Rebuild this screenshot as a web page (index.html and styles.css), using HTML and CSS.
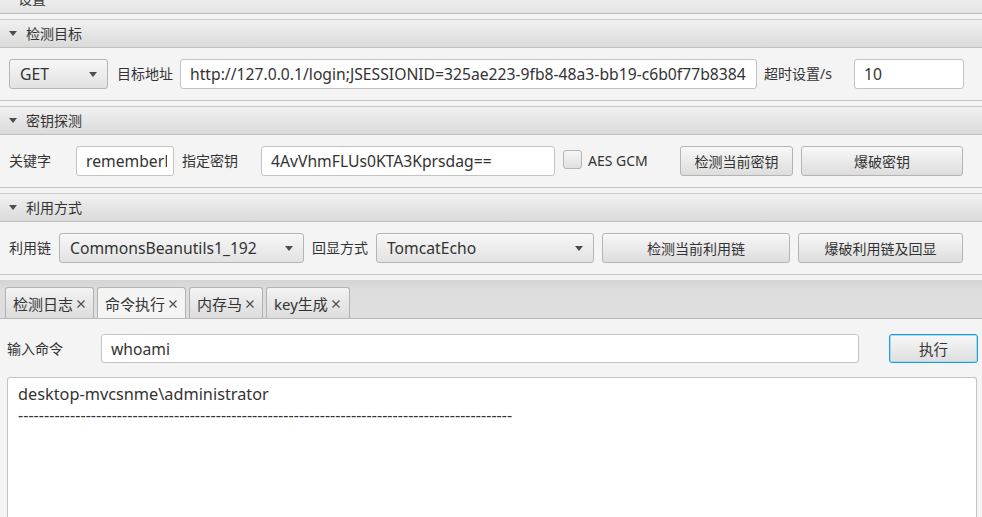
FILE: index.html
```html
<!DOCTYPE html>
<html lang="zh-CN">
<head>
<meta charset="utf-8">
<title>设置</title>
<link rel="stylesheet" href="styles.css">
</head>
<body>
<div class="app">
  <div class="topbar"><span class="toptitle">设置</span></div>

  <section class="pane">
    <div class="pane-head">
      <svg class="tri" width="8" height="5" viewBox="0 0 8 5"><path d="M0 0H8L4 5Z" fill="#4d4d4d"/></svg>
      <span class="head-text">检测目标</span>
    </div>
    <div class="pane-body">
      <div class="combo w-get"><span>GET</span><svg class="arrow" width="8" height="5" viewBox="0 0 8 5"><path d="M0 0H8L4 5Z" fill="#4d4d4d"/></svg></div>
      <span class="lbl l-url">目标地址</span>
      <div class="field f-url"><span class="clip">http://127.0.0.1/login;JSESSIONID=325ae223-9fb8-48a3-bb19-c6b0f77b8384</span></div>
      <span class="lbl l-timeout">超时设置/s</span>
      <div class="field f-timeout"><span class="clip">10</span></div>
    </div>
  </section>

  <section class="pane">
    <div class="pane-head">
      <svg class="tri" width="8" height="5" viewBox="0 0 8 5"><path d="M0 0H8L4 5Z" fill="#4d4d4d"/></svg>
      <span class="head-text">密钥探测</span>
    </div>
    <div class="pane-body">
      <span class="lbl l-key">关键字</span>
      <div class="field f-key"><span class="clip">rememberMe</span></div>
      <span class="lbl l-secret">指定密钥</span>
      <div class="field f-secret"><span class="clip">4AvVhmFLUs0KTA3Kprsdag==</span></div>
      <span class="check"></span>
      <span class="lbl l-gcm">AES GCM</span>
      <div class="btn b-check">检测当前密钥</div>
      <div class="btn b-brute">爆破密钥</div>
    </div>
  </section>

  <section class="pane">
    <div class="pane-head">
      <svg class="tri" width="8" height="5" viewBox="0 0 8 5"><path d="M0 0H8L4 5Z" fill="#4d4d4d"/></svg>
      <span class="head-text">利用方式</span>
    </div>
    <div class="pane-body">
      <span class="lbl l-chain">利用链</span>
      <div class="combo w-chain"><span>CommonsBeanutils1_192</span><svg class="arrow" width="8" height="5" viewBox="0 0 8 5"><path d="M0 0H8L4 5Z" fill="#4d4d4d"/></svg></div>
      <span class="lbl l-echo">回显方式</span>
      <div class="combo w-echo"><span>TomcatEcho</span><svg class="arrow" width="8" height="5" viewBox="0 0 8 5"><path d="M0 0H8L4 5Z" fill="#4d4d4d"/></svg></div>
      <div class="btn b-chain">检测当前利用链</div>
      <div class="btn b-chainbrute">爆破利用链及回显</div>
    </div>
  </section>

  <div class="tabpane">
    <div class="tab-header">
      <div class="tab t1"><span>检测日志</span><svg class="x" width="8" height="8" viewBox="0 0 8 8"><path d="M0.5 0.5L7.5 7.5M7.5 0.5L0.5 7.5" stroke="#505050" stroke-width="1.3"/></svg></div>
      <div class="tab t2 selected"><span>命令执行</span><svg class="x" width="8" height="8" viewBox="0 0 8 8"><path d="M0.5 0.5L7.5 7.5M7.5 0.5L0.5 7.5" stroke="#505050" stroke-width="1.3"/></svg></div>
      <div class="tab t3"><span>内存马</span><svg class="x" width="8" height="8" viewBox="0 0 8 8"><path d="M0.5 0.5L7.5 7.5M7.5 0.5L0.5 7.5" stroke="#505050" stroke-width="1.3"/></svg></div>
      <div class="tab t4"><span>key生成</span><svg class="x" width="8" height="8" viewBox="0 0 8 8"><path d="M0.5 0.5L7.5 7.5M7.5 0.5L0.5 7.5" stroke="#505050" stroke-width="1.3"/></svg></div>
    </div>
    <div class="tab-content">
      <div class="cmd-row">
        <span class="lbl l-cmd">输入命令</span>
        <div class="field f-cmd"><span class="clip">whoami</span></div>
        <div class="btn b-exec">执行</div>
      </div>
      <div class="output">
        <div class="out-line">desktop-mvcsnme\administrator</div>
        <div class="out-line dashes">-----------------------------------------------------------------------------------------------</div>
      </div>
    </div>
  </div>
</div>
</body>
</html>
```
FILE: styles.css
```css
html, body {
  margin: 0;
  padding: 0;
  height: 517px;
  overflow: hidden;
  background: #f4f4f4;
}
body {
  font-family: "Noto Sans", "Noto Sans CJK SC", sans-serif;
  color: #333;
}
.app {
  width: 982px;
}

/* top bar (cut off pane) */
.topbar {
  height: 13px;
  border-bottom: 1px solid #bcbcbc;
  background: linear-gradient(#ececec, #e4e4e4);
  overflow: hidden;
  margin-bottom: 5px;
}
.toptitle {
  display: block;
  margin-top: -13px;
  padding-left: 18px;
  line-height: 24px;
  font-size: 14px;
  color: #333;
}

/* titled panes */
.pane {
  margin-bottom: 5px;
}
.pane-head {
  height: 27px;
  border-top: 1px solid #c9c9c9;
  border-bottom: 1px solid #bfbfbf;
  background: linear-gradient(#f1f1f1, #dadada);
  display: flex;
  align-items: center;
  font-size: 14px;
  color: #333;
}
.head-text {
  margin-top: -2px;
}
.tri {
  margin-left: 9px;
  margin-right: 9px;
  flex: none;
}
.pane-body {
  height: 52px;
  border-bottom: 1px solid #c8c8c8;
  display: flex;
  align-items: center;
}

/* controls */
.lbl {
  font-size: 14px;
  color: #333;
  white-space: nowrap;
  flex: none;
  margin-top: -2px;
}
.field {
  height: 30px;
  box-sizing: border-box;
  border: 1px solid #c3c3c3;
  border-radius: 3px;
  background: #fff;
  display: flex;
  align-items: center;
  padding: 0 6px 0 9px;
  font-size: 15.7px;
  color: #333;
  flex: none;
}
.clip {
  overflow: hidden;
  white-space: nowrap;
  display: block;
  min-width: 0;
}
.combo {
  height: 30px;
  box-sizing: border-box;
  border: 1px solid #b5b5b5;
  border-radius: 3px;
  background: linear-gradient(#f7f7f7, #e2e2e2);
  display: flex;
  align-items: center;
  justify-content: space-between;
  padding: 0 10px 0 10px;
  font-size: 15.7px;
  color: #333;
  flex: none;
}
.arrow {
  flex: none;
}
.btn {
  height: 30px;
  box-sizing: border-box;
  border: 1px solid #b4b4b4;
  border-radius: 3px;
  background: linear-gradient(#f8f8f8, #dddddd);
  display: flex;
  align-items: center;
  justify-content: center;
  font-size: 14px;
  color: #333;
  flex: none;
}
.check {
  width: 19px;
  height: 19px;
  box-sizing: border-box;
  border: 1px solid #b5b5b5;
  border-radius: 3px;
  background: linear-gradient(#f6f6f6, #e0e0e0);
  flex: none;
  margin-left: 8px;
  margin-top: -3px;
}

/* row 1 */
.w-get { margin-left: 9px; width: 99px; }
.l-url { margin-left: 9px; width: 55px; }
.f-url { margin-left: 8px; width: 577px; }
.l-timeout { margin-left: 7px; width: 68px; }
.f-timeout { margin-left: 22px; width: 110px; }

/* row 2 */
.l-key { margin-left: 9px; width: 67px; }
.f-key { width: 98px; }
.l-secret { margin-left: 8px; width: 79px; }
.f-secret { width: 294px; }
.l-gcm { margin-left: 6px; width: 92px; }
.b-check { width: 113px; }
.b-brute { margin-left: 8px; width: 162px; }

/* row 3 */
.l-chain { margin-left: 9px; width: 50px; }
.w-chain { width: 245px; }
.l-echo { margin-left: 8px; width: 64px; }
.w-echo { width: 218px; }
.b-chain { margin-left: 8px; width: 188px; }
.b-chainbrute { margin-left: 8px; width: 165px; }

/* tab pane */
.tabpane {
  margin-top: 5px;
}
.tab-header {
  height: 38px;
  box-sizing: content-box;
  border-bottom: 1px solid #b8b8b8;
  background: linear-gradient(#d4d4d4, #dddddd 25%, #dedede);
  display: flex;
  align-items: flex-end;
  padding-left: 5px;
}
.tab {
  height: 31px;
  box-sizing: border-box;
  border: 1px solid #b2b2b2;
  border-bottom: none;
  border-radius: 3px 3px 0 0;
  background: linear-gradient(#f3f3f3, #dcdcdc);
  display: flex;
  align-items: center;
  padding: 1px 0 0 7px;
  font-size: 15px;
  color: #333;
  margin-right: 3px;
  flex: none;
}
.tab.selected {
  background: #f4f4f4;
}
.tab .x {
  margin-left: 4px;
  flex: none;
}
.t1 { width: 89px; }
.t2 { width: 89px; }
.t3 { width: 74px; }
.t4 { width: 84px; }

.tab-content {
  padding-top: 15px;
}
.cmd-row {
  height: 29px;
  display: flex;
  align-items: center;
}
.l-cmd { margin-left: 7px; width: 94px; }
.f-cmd { width: 758px; height: 29px; }
.b-exec {
  margin-left: 30px;
  width: 89px;
  height: 29px;
  border: 1px solid #1b9fd6;
  box-shadow: inset 0 0 0 1px #a9daf1;
  background: linear-gradient(#f7f7f7, #dedede);
  font-size: 14.5px;
}
.output {
  margin: 14px 5px 0 7px;
  height: 140px;
  box-sizing: border-box;
  border: 1px solid #c3c3c3;
  border-bottom: none;
  border-radius: 3px 3px 0 0;
  background: #fff;
  padding: 6px 10px 0 10px;
  font-size: 16.3px;
  line-height: 21px;
  color: #333;
}
.out-line {
  white-space: nowrap;
}
.dashes {
  font-size: 16px;
  letter-spacing: 0.05px;
}
```
